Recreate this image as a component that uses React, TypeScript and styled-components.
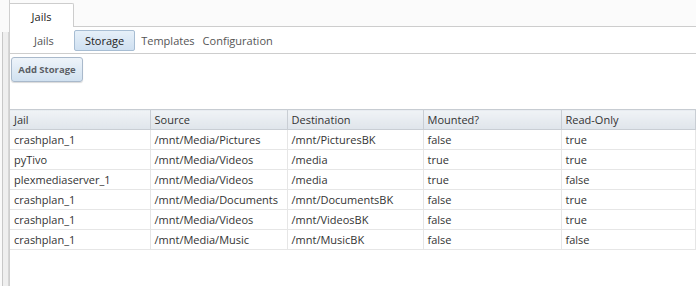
import styled, { createGlobalStyle } from "styled-components";

const GlobalStyle = createGlobalStyle`
  body {
    margin: 0;
    background: #ffffff;
    font-family: "Open Sans", "Liberation Sans", sans-serif;
    font-size: 11px;
    color: #333;
  }
`;

const Page = styled.div`
  display: flex;
  width: 696px;
  height: 286px;
  overflow: hidden;
  background: #fff;
`;

const Sidebar = styled.div`
  width: 9px;
  flex-shrink: 0;
  padding-top: 32px;
  box-sizing: border-box;
  background: #fafafa;
`;

const Rail = styled.div`
  height: 100%;
  margin-left: 2px;
  border-left: 1px solid #c8c8c8;
  border-right: 1px solid #d6d6d6;
  background: #efefef;
`;

const Main = styled.div`
  flex: 1;
  display: flex;
  flex-direction: column;
  border-left: 1px solid #cfcfcf;
  min-width: 0;
`;

const TabStrip = styled.div`
  height: 27px;
  display: flex;
  align-items: flex-end;
  border-bottom: 1px solid #cdcdcd;
  box-sizing: border-box;
  background: #fbfbfb;
`;

const Tab = styled.div`
  width: 64px;
  height: 24px;
  margin-bottom: -1px;
  padding-top: 2px;
  box-sizing: border-box;
  display: flex;
  align-items: center;
  justify-content: center;
  background: #fff;
  border: 1px solid #cdcdcd;
  border-left: none;
  border-bottom: none;
  border-top-right-radius: 2px;
  color: #222;
  font-size: 11px;
`;

const SubNav = styled.div`
  height: 27px;
  display: flex;
  align-items: center;
  gap: 4px;
  padding-left: 22px;
  border-bottom: 1px solid #cdcdcd;
  box-sizing: border-box;
`;

const NavItem = styled.div<{ $active?: boolean }>`
  height: 19px;
  display: flex;
  align-items: center;
  padding: 0 ${(p) => (p.$active ? "10px" : "1px")};
  color: ${(p) => (p.$active ? "#222" : "#555")};
  background: ${(p) =>
    p.$active ? "linear-gradient(#e6f0f9, #cfe0f1)" : "transparent"};
  border: 1px solid ${(p) => (p.$active ? "#a7bdd3" : "transparent")};
  border-radius: 2px;
  &:first-child {
    margin-right: 14px;
  }
`;

const Toolbar = styled.div`
  height: 55px;
  padding: 3px 0 0 1px;
  box-sizing: border-box;
`;

const Button = styled.button`
  width: 72px;
  height: 25px;
  font-family: "Open Sans", "Liberation Sans", sans-serif;
  font-size: 9.5px;
  font-weight: 700;
  color: #5b5f66;
  background: linear-gradient(#eef4fa, #d1e1f0);
  border: 1px solid #a9b9cb;
  border-radius: 3px;
  box-shadow: 0 1px 1px rgba(0, 0, 0, 0.15);
  padding: 0;
`;

const Table = styled.table`
  width: 100%;
  border-collapse: collapse;
  table-layout: fixed;
  border-top: 1px solid #c7ccd2;
`;

const Th = styled.th<{ $w?: number }>`
  box-sizing: border-box;
  width: ${(p) => (p.$w ? `${p.$w}px` : "auto")};
  height: 20px;
  padding: 0 0 0 4px;
  text-align: left;
  font-weight: 400;
  color: #333;
  background: linear-gradient(#f0f3f6, #dfe5eb);
  border-right: 1px solid #c9ced4;
  border-bottom: 1px solid #c9ced4;
`;

const Td = styled.td`
  height: 19px;
  padding: 0 0 0 4px;
  white-space: nowrap;
  overflow: hidden;
  color: #333;
  border-right: 1px solid #e6e6e6;
  border-bottom: 1px solid #e6e6e6;
`;

const columns = [
  { label: "Jail", w: 140 },
  { label: "Source", w: 137 },
  { label: "Destination", w: 136 },
  { label: "Mounted?", w: 138 },
  { label: "Read-Only" },
];

const rows = [
  ["crashplan_1", "/mnt/Media/Pictures", "/mnt/PicturesBK", "false", "true"],
  ["pyTivo", "/mnt/Media/Videos", "/media", "true", "true"],
  ["plexmediaserver_1", "/mnt/Media/Videos", "/media", "true", "false"],
  ["crashplan_1", "/mnt/Media/Documents", "/mnt/DocumentsBK", "false", "true"],
  ["crashplan_1", "/mnt/Media/Videos", "/mnt/VideosBK", "false", "true"],
  ["crashplan_1", "/mnt/Media/Music", "/mnt/MusicBK", "false", "false"],
];

function App() {
  return (
    <>
      <GlobalStyle />
      <Page>
        <Sidebar>
          <Rail />
        </Sidebar>
        <Main>
          <TabStrip>
            <Tab>Jails</Tab>
          </TabStrip>
          <SubNav>
            <NavItem>Jails</NavItem>
            <NavItem $active>Storage</NavItem>
            <NavItem>Templates</NavItem>
            <NavItem>Configuration</NavItem>
          </SubNav>
          <Toolbar>
            <Button>Add Storage</Button>
          </Toolbar>
          <Table>
            <thead>
              <tr>
                {columns.map((c) => (
                  <Th key={c.label} $w={c.w}>
                    {c.label}
                  </Th>
                ))}
              </tr>
            </thead>
            <tbody>
              {rows.map((r, i) => (
                <tr key={i}>
                  {r.map((cell, j) => (
                    <Td key={j}>{cell}</Td>
                  ))}
                </tr>
              ))}
            </tbody>
          </Table>
        </Main>
      </Page>
    </>
  );
}

export default App;
